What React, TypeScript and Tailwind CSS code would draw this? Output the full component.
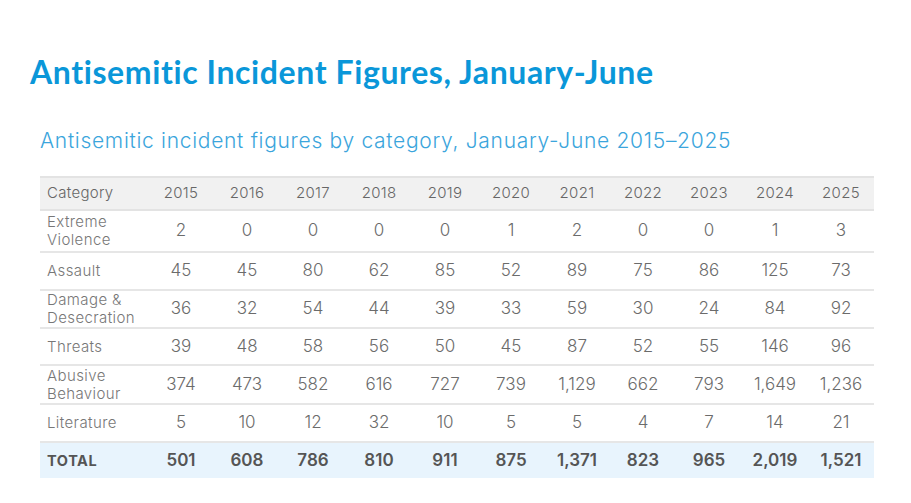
const years = ['2015', '2016', '2017', '2018', '2019', '2020', '2021', '2022', '2023', '2024', '2025'];

const rows: { label: string[]; values: string[]; h: string }[] = [
  { label: ['Extreme', 'Violence'], values: ['2', '0', '0', '0', '0', '1', '2', '0', '0', '1', '3'], h: 'h-[42px]' },
  { label: ['Assault'], values: ['45', '45', '80', '62', '85', '52', '89', '75', '86', '125', '73'], h: 'h-[38px]' },
  { label: ['Damage &', 'Desecration'], values: ['36', '32', '54', '44', '39', '33', '59', '30', '24', '84', '92'], h: 'h-[38px]' },
  { label: ['Threats'], values: ['39', '48', '58', '56', '50', '45', '87', '52', '55', '146', '96'], h: 'h-[37px]' },
  { label: ['Abusive', 'Behaviour'], values: ['374', '473', '582', '616', '727', '739', '1,129', '662', '793', '1,649', '1,236'], h: 'h-[39px]' },
  { label: ['Literature'], values: ['5', '10', '12', '32', '10', '5', '5', '4', '7', '14', '21'], h: 'h-[38px]' },
];

const totals = ['501', '608', '786', '810', '911', '875', '1,371', '823', '965', '2,019', '1,521'];

const grid = 'grid grid-cols-[108px_repeat(11,66px)] items-center';

export default function App() {
  return (
    <div className="w-[911px] h-[503px] bg-white overflow-hidden font-['Lato',sans-serif]">
      <h1 className="pt-[52px] pl-[30px] text-[32px] leading-[40px] font-bold text-[#0a97d9] tracking-[0.6px]">
        Antisemitic Incident Figures, January-June
      </h1>
      <div className="pl-[40px]">
        <h2 className="mt-[35px] text-[21px] leading-[28px] font-['Inter',sans-serif] font-light text-[#3ba5dc] tracking-[0.7px]">
          Antisemitic incident figures by category, January-June 2015–2025
        </h2>
        <div className="mt-[21px] w-[834px] font-['Inter',sans-serif] font-light text-[#6b6b6b]">
          <div className={`${grid} h-[35px] bg-[#f1f1f1] border-t-2 border-b-2 border-[#e3e3e3] text-[15px] tracking-[0.3px]`}>
            <div className="pl-[7px] text-[#666]">Category</div>
            {years.map(y => (
              <div key={y} className="text-center text-[#666]">{y}</div>
            ))}
          </div>
          {rows.map(r => (
            <div key={r.label[0]} className={`${grid} ${r.h} border-b-2 border-[#e6e6e6]`}>
              <div className="pl-[7px] text-[15px] leading-[18px] text-[#777] tracking-[0.4px]">
                {r.label.map(l => (
                  <div key={l}>{l}</div>
                ))}
              </div>
              {r.values.map((v, i) => (
                <div key={i} className="text-center text-[17px]">{v}</div>
              ))}
            </div>
          ))}
          <div className={`${grid} h-[35px] bg-[#e8f4fd] font-bold text-[#555]`}>
            <div className="pl-[7px] text-[14.5px] tracking-[0.6px]">TOTAL</div>
            {totals.map((v, i) => (
              <div key={i} className="text-center text-[17px] font-semibold">{v}</div>
            ))}
          </div>
        </div>
      </div>
    </div>
  );
}
